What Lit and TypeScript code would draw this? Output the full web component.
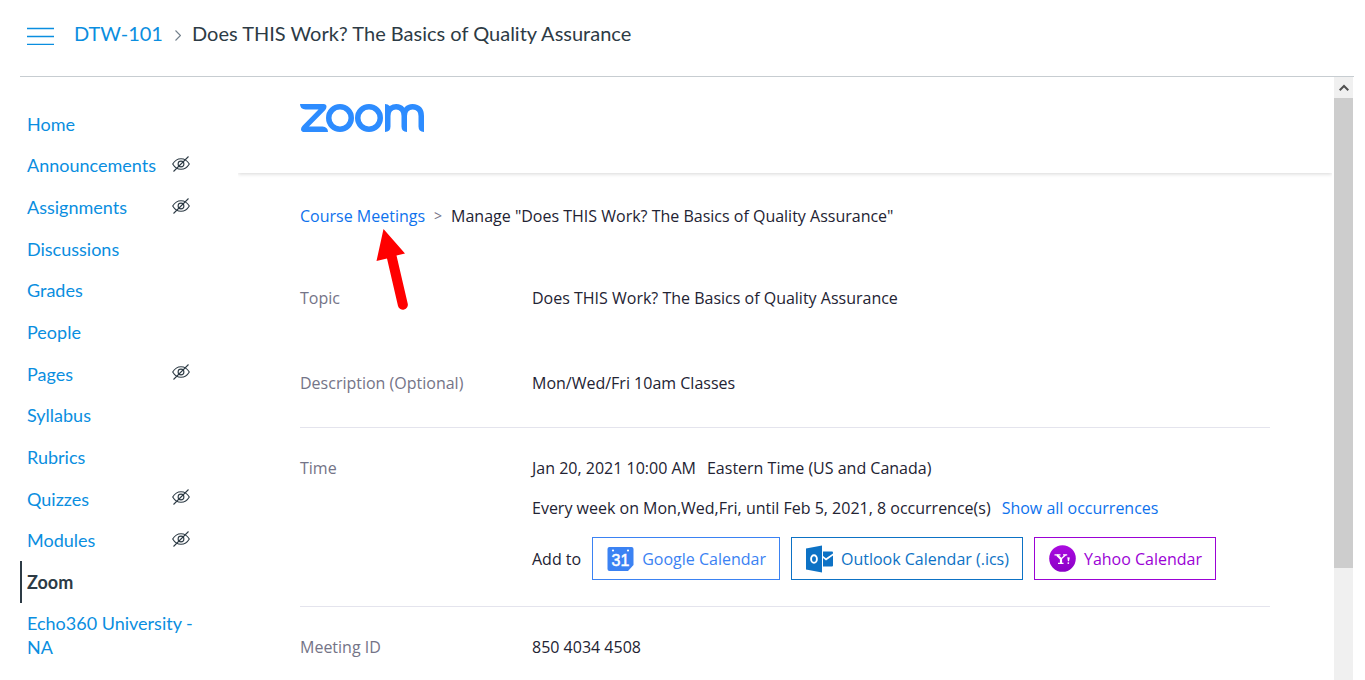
import { LitElement, html, css, svg, nothing } from "lit";
import { customElement } from "lit/decorators.js";
import { classMap } from "lit/directives/class-map.js";

interface NavItem {
  label: string;
  hidden?: boolean;
  active?: boolean;
}

const NAV: NavItem[] = [
  { label: "Home" },
  { label: "Announcements", hidden: true },
  { label: "Assignments", hidden: true },
  { label: "Discussions" },
  { label: "Grades" },
  { label: "People" },
  { label: "Pages", hidden: true },
  { label: "Syllabus" },
  { label: "Rubrics" },
  { label: "Quizzes", hidden: true },
  { label: "Modules", hidden: true },
  { label: "Zoom", active: true },
  { label: "Echo360 University - NA" },
];

const hiddenIcon = html`<svg class="off" viewBox="0 0 18 16" width="18" height="16" role="img" aria-label="Hidden from students">
  <g fill="none" stroke="#2d3b45" stroke-width="1.1">
    <path d="M0.7 8C2.7 4.6 5.6 2.7 9 2.7S15.300 4.600 17.300 8C15.300 11.400 12.400 13.300 9 13.300S2.700 11.400 0.700 8Z" />
    <circle cx="9" cy="8" r="2.900" />
    <path d="M16.500 0.500L1.500 15.500" />
  </g>
</svg>`;

const zoomLogo = html`<svg class="logo" viewBox="0 0 124 28" width="124" height="28" role="img" aria-label="Zoom">
  <g fill="#2d8cff">
    <path d="M0 0H23.500Q26.500 0 26.500 2.800Q26.500 4.600 25 6.200L9 22.500H22.500Q28 23 28 28H4.500Q1 28 1 25.200Q1 23.400 2.600 21.800L18.500 5.500H5.500Q0 5 0 0Z" />
    <path fill-rule="evenodd" d="M40 0a14 14 0 1 1 0 28a14 14 0 1 1 0-28ZM40 5.500a8.500 8.500 0 1 0 0 17a8.500 8.500 0 1 0 0-17Z" />
    <path fill-rule="evenodd" d="M69 0a14 14 0 1 1 0 28a14 14 0 1 1 0-28ZM69 5.500a8.500 8.500 0 1 0 0 17a8.500 8.500 0 1 0 0-17Z" />
    <path d="M85 0Q88 0 89.700 2Q92.500 0 96.200 0Q101.500 0 104.300 3.700Q107.500 0 112.500 0Q124 0.500 124 12V28Q118.500 27.500 118.500 22.500V12Q118.500 5.500 112.700 5.500Q107 5.500 107 12V28Q101.500 27.500 101.500 22.500V12Q101.500 5.500 96 5.500Q90.500 5.500 90.500 12V22.500Q90.500 27.500 85 28Z" />
  </g>
</svg>`;

const googleIcon = html`<svg viewBox="0 0 27 26" width="27" height="26" aria-hidden="true">
  <path d="M2.500 1H24.500Q26.500 1 26.500 3V19L21 25H2.500Q0.500 25 0.500 23V3Q0.500 1 2.500 1Z" fill="#3b82f3" />
  <circle cx="6" cy="4.500" r="1.100" fill="#fff" />
  <circle cx="21" cy="4.500" r="1.100" fill="#fff" />
  <text x="13.500" y="20" text-anchor="middle" font-family="Liberation Sans, sans-serif" font-size="16" fill="#fff" stroke="#fff" stroke-width="0.5">31</text>
</svg>`;

const outlookIcon = html`<svg viewBox="0 0 27 28" width="27" height="28" aria-hidden="true">
  <path d="M0 3.500L16 0.500V27.500L0 24.500Z" fill="#0d72c5" />
  <ellipse cx="8" cy="14" rx="2.900" ry="3.800" fill="none" stroke="#fff" stroke-width="1.900" />
  <path d="M17 6.500H26Q27 6.500 27 7.500V8.500L20 13.300L17 11Z" fill="#0d72c5" />
  <path d="M17 13L20 15.500L27 10.500V20.500Q27 21.500 26 21.500H17Z" fill="#0d72c5" />
</svg>`;

const yahooIcon = html`<svg viewBox="0 0 27 27" width="27" height="27" aria-hidden="true">
  <defs>
    <linearGradient id="purple" x1="0" y1="0" x2="0" y2="1">
      <stop offset="0" stop-color="#ab0be0" />
      <stop offset="1" stop-color="#8a00c6" />
    </linearGradient>
  </defs>
  <circle cx="13.500" cy="13.500" r="13.300" fill="url(#purple)" />
  <path d="M5.500 9.800H11.500M14 9.800H18.200M9 18.300H14.500" stroke="#fff" stroke-width="1.200" fill="none" />
  <path d="M8 9.900L12 14V18.200" stroke="#fff" stroke-width="2.200" fill="none" />
  <path d="M12 14L16.500 9.900" stroke="#fff" stroke-width="1.300" fill="none" />
  <path d="M18.300 12.300L20.800 12.600L20 16.300H18.900Z" fill="#fff" />
  <circle cx="19.300" cy="18.100" r="0.900" fill="#fff" />
</svg>`;

@customElement("course-nav")
export class CourseNav extends LitElement {
  static styles = css`
    :host {
      display: block;
      font-family: Lato, sans-serif;
      font-size: 18px;
      line-height: 24px;
    }
    .list {
      display: grid;
      grid-template-rows: repeat(12, 1fr);
      min-height: 500px;
      margin: 0;
      padding: 0;
      list-style: none;
    }
    .rest {
      margin: 0;
      padding: 0;
      list-style: none;
    }
    .item {
      display: flex;
      align-items: center;
      justify-content: space-between;
      padding: 8px 0 8px 5px;
      border-left: 2px solid transparent;
    }
    .active {
      border-left-color: #2d3b45;
    }
    .link {
      color: #0a8ee0;
      text-decoration: none;
    }
    .active .link {
      color: #2d3b45;
      font-weight: 700;
    }
    .off {
      flex: none;
      margin-right: 10px;
      margin-bottom: 3px;
    }
  `;

  private row(item: NavItem) {
    return html`<li class=${classMap({ item: true, active: !!item.active })}>
      <a class="link" href="#">${item.label}</a>${item.hidden ? hiddenIcon : nothing}
    </li>`;
  }

  render() {
    return html`<nav aria-label="Course">
      <ul class="list">${NAV.slice(0, 12).map((i) => this.row(i))}</ul>
      <ul class="rest">${NAV.slice(12).map((i) => this.row(i))}</ul>
    </nav>`;
  }
}

@customElement("meeting-details")
export class MeetingDetails extends LitElement {
  static styles = css`
    :host {
      display: block;
      font-family: "Open Sans", sans-serif;
      font-size: 16px;
      line-height: 24px;
      color: #232333;
    }
    .brand {
      padding: 27px 62px 41px;
      margin-right: 2px;
      box-shadow: 0 1px 4px rgba(0, 0, 0, 0.16);
      clip-path: inset(0 0 -6px 0);
    }
    .logo {
      display: block;
    }
    .body {
      padding: 31px 64px 0 62px;
    }
    .crumbs {
      display: flex;
      gap: 9px;
      margin-bottom: 30px;
    }
    .sep {
      color: #747487;
      font-size: 14px;
    }
    .link {
      color: #0e72ed;
      text-decoration: none;
    }
    .details {
      margin: 0;
    }
    .row {
      display: grid;
      grid-template-columns: 232px 1fr;
      padding: 28px 0 33px;
    }
    .ruled {
      padding-bottom: 32px;
      border-bottom: 1px solid #e4e4ed;
    }
    .time {
      padding-bottom: 26px;
    }
    .label {
      color: #747487;
    }
    .value {
      display: flex;
      flex-direction: column;
      gap: 16px;
      margin: 0;
    }
    .line {
      display: flex;
      flex-wrap: wrap;
      gap: 11px;
    }
    .actions {
      align-items: center;
      padding-top: 1px;
    }
    .button {
      display: flex;
      align-items: center;
      gap: 8px;
      height: 43px;
      padding: 0 13px 0 14px;
      border: 1px solid currentColor;
      background: #fff;
      font: inherit;
    }
    .google {
      color: #3b82f3;
    }
    .outlook {
      color: #0d72c5;
    }
    .yahoo {
      color: #9b02d5;
    }
  `;

  render() {
    return html`
      <header class="brand">${zoomLogo}</header>
      <div class="body">
        <nav class="crumbs" aria-label="Breadcrumb">
          <a class="link" href="#">Course Meetings</a>
          <span class="sep">&gt;</span>
          <span>Manage "Does THIS Work? The Basics of Quality Assurance"</span>
        </nav>
        <dl class="details">
          <div class="row">
            <dt class="label">Topic</dt>
            <dd class="value">Does THIS Work? The Basics of Quality Assurance</dd>
          </div>
          <div class="row ruled">
            <dt class="label">Description (Optional)</dt>
            <dd class="value">Mon/Wed/Fri 10am Classes</dd>
          </div>
          <div class="row ruled time">
            <dt class="label">Time</dt>
            <dd class="value">
              <div class="line"><span>Jan 20, 2021 10:00 AM</span><span>Eastern Time (US and Canada)</span></div>
              <div class="line">
                <span>Every week on Mon,Wed,Fri, until Feb 5, 2021, 8 occurrence(s)</span>
                <a class="link" href="#">Show all occurrences</a>
              </div>
              <div class="line actions">
                <span>Add to</span>
                <button class="button google" type="button">${googleIcon}Google Calendar</button>
                <button class="button outlook" type="button">${outlookIcon}Outlook Calendar (.ics)</button>
                <button class="button yahoo" type="button">${yahooIcon}Yahoo Calendar</button>
              </div>
            </dd>
          </div>
          <div class="row">
            <dt class="label">Meeting ID</dt>
            <dd class="value">850 4034 4508</dd>
          </div>
        </dl>
      </div>
    `;
  }
}

@customElement("app-root")
export class AppRoot extends LitElement {
  static styles = css`
    :host {
      display: flex;
      flex-direction: column;
      height: 100vh;
      overflow: hidden;
      box-sizing: border-box;
      padding: 0 11px 0 20px;
      background: #fff;
      position: relative;
    }
    .top {
      flex: none;
      display: flex;
      align-items: center;
      height: 66px;
      padding: 0 0 10px 7px;
      border-bottom: 1px solid #c7cdd1;
      font-family: Lato, sans-serif;
      font-size: 20px;
      line-height: 24px;
      color: #2d3b45;
    }
    .menu {
      display: flex;
      margin-right: 20px;
      padding: 6px 0 0;
      border: 0;
      background: none;
    }
    .course {
      color: #0a8ee0;
      text-decoration: none;
    }
    .chevron {
      margin: 4px 11px 0 12px;
    }
    .main {
      flex: 1;
      min-height: 0;
      display: flex;
    }
    .nav {
      flex: none;
      width: 180px;
      margin: 26px 38px 0 0;
    }
    .frame {
      flex: 1;
      min-width: 0;
      overflow: hidden;
    }
    .scroll {
      flex: none;
      width: 19px;
      margin-right: 1px;
      background: #f0f0f0;
    }
    .up {
      display: flex;
      align-items: center;
      justify-content: center;
      height: 21px;
    }
    .thumb {
      height: 470px;
      background: #cdcdcd;
    }
    .pointer {
      position: absolute;
      left: 375px;
      top: 228px;
    }
  `;

  render() {
    return html`
      <header class="top">
        <button class="menu" type="button" aria-label="Course navigation menu">
          <svg width="27" height="18" viewBox="0 0 27 18">
            <path d="M0 1.500H27M0 9.500H27M0 17.500H27" stroke="#0a8ee0" stroke-width="1.300" />
          </svg>
        </button>
        <a class="course" href="#">DTW-101</a>
        <svg class="chevron" width="6" height="11" viewBox="0 0 6 11" aria-hidden="true">
          <path d="M0.500 0.500L5.400 5.500L0.500 10.500" fill="none" stroke="#73818c" stroke-width="1.100" />
        </svg>
        <span>Does THIS Work? The Basics of Quality Assurance</span>
      </header>
      <div class="main">
        <course-nav class="nav"></course-nav>
        <meeting-details class="frame"></meeting-details>
        <div class="scroll" aria-hidden="true">
          <div class="up">
            <svg width="10" height="8" viewBox="0 0 10 8">
              <path d="M0.700 6.300L5 2L9.300 6.300" fill="none" stroke="#505050" stroke-width="2" />
            </svg>
          </div>
          <div class="thumb"></div>
        </div>
      </div>
      <svg class="pointer" width="36" height="84" viewBox="0 0 36 84" aria-hidden="true">
        ${svg`<path d="M8.500 1L30 25.500L21.500 27.500L32.700 75.500A5 5 0 0 1 23 78L12 30.500L1.500 33Z" fill="#ff0000" />`}
      </svg>
    `;
  }
}
